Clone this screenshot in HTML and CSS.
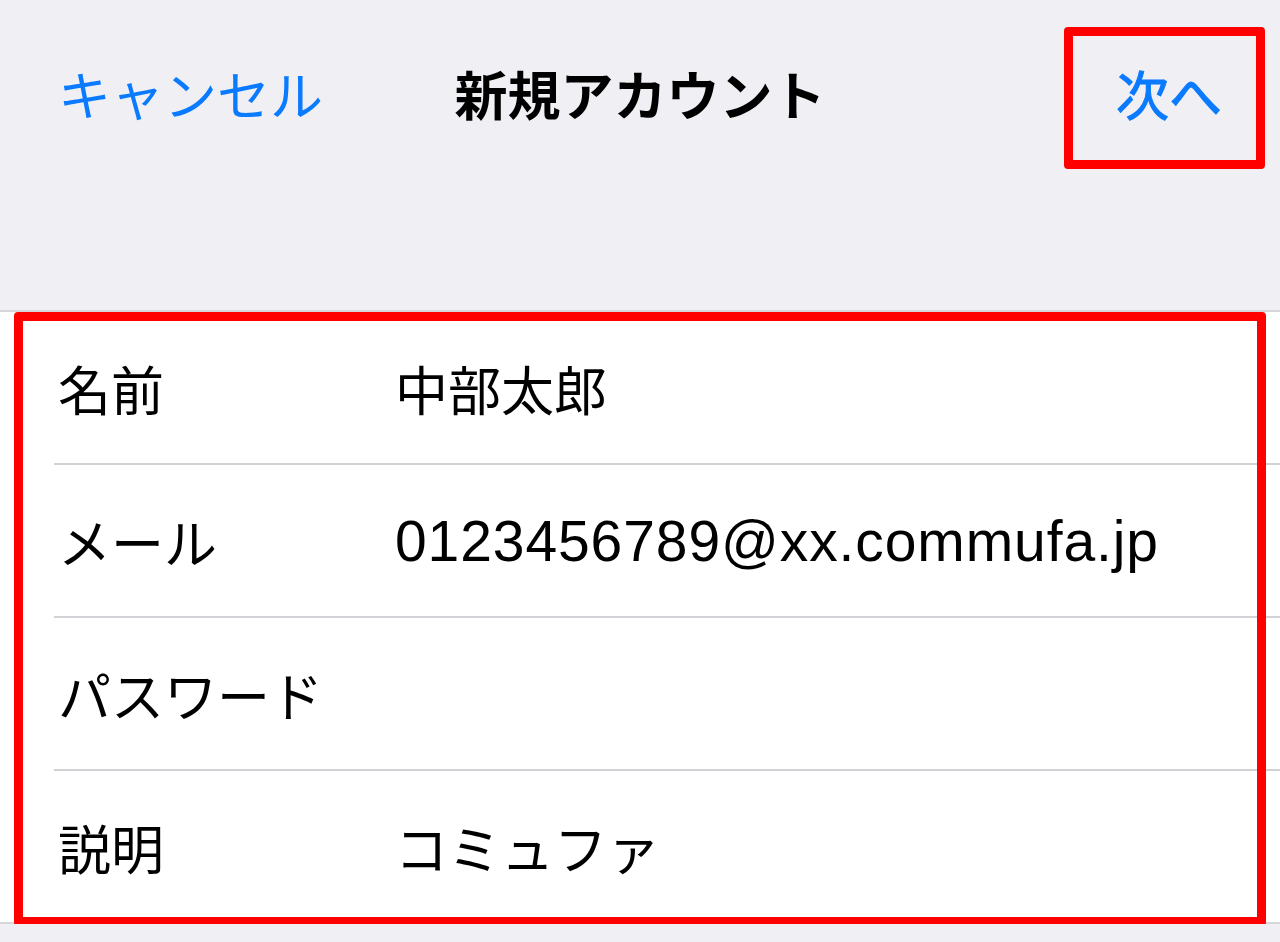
FILE: index.html
```html
<!DOCTYPE html>
<html lang="ja">
<head>
    <meta charset="UTF-8">
    <meta name="viewport" content="width=device-width, initial-scale=1.0">
    <title>新規アカウント</title>
    <link rel="stylesheet" href="styles.css">
</head>
<body>
    <header class="nav">
        <a class="nav-btn cancel">キャンセル</a>
        <h1 class="nav-title">新規アカウント</h1>
        <a class="nav-btn next marked">次へ</a>
    </header>

    <main class="form">
        <ul class="fields marked">
            <li class="field">
                <div class="field-inner">
                    <span class="label">名前</span>
                    <span class="value">中部太郎</span>
                </div>
            </li>
            <li class="field">
                <div class="field-inner">
                    <span class="label">メール</span>
                    <span class="value latin">0123456789@xx.commufa.jp</span>
                </div>
            </li>
            <li class="field">
                <div class="field-inner">
                    <span class="label">パスワード</span>
                    <span class="value"></span>
                </div>
            </li>
            <li class="field">
                <div class="field-inner">
                    <span class="label">説明</span>
                    <span class="value">コミュファ</span>
                </div>
            </li>
        </ul>
    </main>
</body>
</html>
```

FILE: styles.css
```css
/* 新規アカウント画面 */
body {
    font-family: 'Liberation Sans', 'Noto Sans CJK JP', sans-serif;
    margin: 0;
    padding: 0;
    background-color: #efeff4;
    color: #000;
}

.nav {
    height: 186px;
    padding: 4px 58px 0;
    display: grid;
    grid-template-columns: 1fr auto 1fr;
    align-items: center;
}

.nav-btn {
    font-size: 53px;
    line-height: 1;
    color: #0a7aff;
    cursor: pointer;
}

.cancel {
    justify-self: start;
}

/* セミボールド相当 */
.next {
    justify-self: end;
    font-weight: 400;
    -webkit-text-stroke: 1px currentColor;
}

.nav-title {
    margin: 0;
    font-size: 53px;
    line-height: 1;
    font-weight: 700;
}

.form {
    margin-top: 120px;
}

.fields {
    list-style: none;
    margin: 0;
    padding: 0;
    background-color: #fff;
    border-top: 2px solid #d6d6db;
    border-bottom: 2px solid #d6d6db;
}

.field {
    padding-left: 54px;
}

.field-inner {
    height: 151px;
    padding-left: 4px;
    display: flex;
    align-items: center;
    font-size: 53px;
}

.field + .field .field-inner {
    border-top: 2px solid #d1d1d6;
}

.label {
    width: 337px;
    flex-shrink: 0;
}

.latin {
    font-size: 57px;
    letter-spacing: 0.9px;
}

/* 赤枠（説明用の囲み） */
.marked {
    position: relative;
}

.marked::after {
    content: '';
    position: absolute;
    border: 9px solid #ff0000;
    border-radius: 4px;
    pointer-events: none;
    -webkit-text-stroke: 0;
}

.next.marked::after {
    top: -44px;
    bottom: -45px;
    left: -52px;
    right: -43px;
}

.fields.marked::after {
    top: 0;
    bottom: -4px;
    left: 14px;
    right: 14px;
}
```
